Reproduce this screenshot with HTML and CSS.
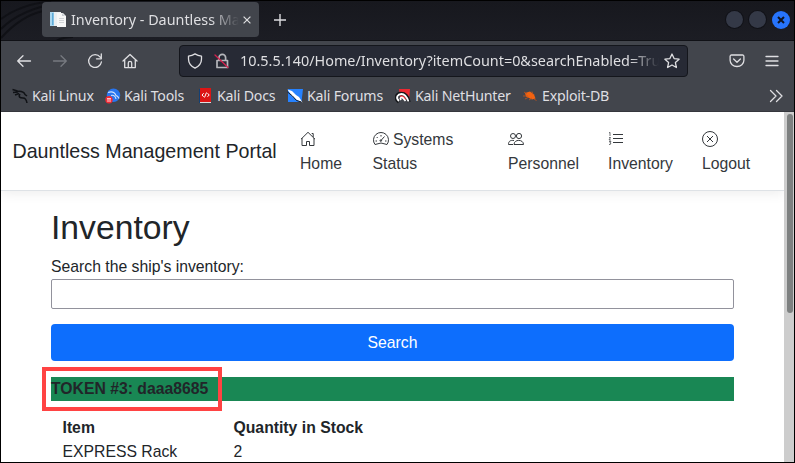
FILE: index.html
```html
<!DOCTYPE html>
<html lang="en">
<head>
<meta charset="utf-8">
<title>Inventory - Dauntless Management Portal</title>
<link rel="stylesheet" href="styles.css">
</head>
<body>
<div class="window">
  <header class="tabs">
    <svg class="streaks" width="130" height="40" viewBox="0 0 130 40"><path d="M0 18Q18 4 50 0M0 28Q20 8 58 2M0 37Q20 15 42 10M55 40Q62 36 72 36" /></svg>
    <div class="tab">
      <svg class="favicon" width="16" height="16" viewBox="0 0 16 16"><path fill="#a9d6ef" d="M0 0h6v14H0z"/><path fill="#5ea9d6" d="M2 1h1.500v12H2z"/><path fill="#e9edf0" d="M4 0h7v14H4z"/><path fill="#f6f6f6" d="M7 1h6l3 3v11H7z"/><path d="M9 6.500h5M9 8.500h5M9 10.500h5" stroke="#d0d3d6" fill="none"/><path fill="#c8cdd2" d="M12 1v3h3z"/></svg>
      <span class="tab-title">Inventory - Dauntless Man</span>
      <svg class="tab-close" width="8" height="8" viewBox="0 0 8 8"><path d="M.6.6l6.8 6.8M7.4.6L.6 7.4" stroke="#dedee0" stroke-width="1.2"/></svg>
    </div>
    <svg class="plus" width="12" height="12" viewBox="0 0 12 12"><path d="M6 0v12M0 6h12" stroke="#dcdcdf" stroke-width="1.4"/></svg>
    <div class="controls"><i></i><i></i><b><svg width="8" height="8" viewBox="0 0 8 8"><path d="M1 1l6 6M7 1L1 7" stroke="#10141f" stroke-width="2"/></svg></b></div>
  </header>
  <div class="toolbar">
    <svg class="ico back" width="16" height="16" viewBox="0 0 16 16"><path d="M14.5 8H1.700M7 2.700L1.700 8 7 13.300"/></svg>
    <svg class="ico forward" width="16" height="16" viewBox="0 0 16 16"><path d="M1.500 8h12.800M9 2.700L14.300 8 9 13.300"/></svg>
    <svg class="ico reload" width="16" height="16" viewBox="0 0 16 16"><path d="M13.200 4.200A6.400 6.400 0 1 0 14.400 9M14.300 1v4.800H9.500"/></svg>
    <svg class="ico home" width="16" height="16" viewBox="0 0 16 16"><path d="M1 8l7-6.500L15 8M2.700 7v7.600h10.600V7M6.300 14.500V10a1.700 1.700 0 0 1 3.400 0v4.500"/></svg>
    <div class="address">
      <svg class="ico" width="16" height="16" viewBox="0 0 16 16"><path d="M8 .9c2 1.300 4.200 2 6.500 2.200v2.800c0 4-2.700 7.300-6.500 9.300C4.200 13.200 1.500 9.900 1.500 5.900V3.100C3.800 2.900 6 2.200 8 .9z"/></svg>
      <svg class="ico lock" width="16" height="16" viewBox="0 0 16 16"><path d="M3 7.500h10.500v7H3zM5 7V4.600a3.300 3.300 0 0 1 6.600 0V7" stroke-width="1.700"/><path class="slash" d="M1 2l13 12.500"/></svg>
      <span class="url">10.5.5.140/Home/Inventory?itemCount=0&amp;searchEnabled=True</span>
      <svg class="ico star" width="16" height="16" viewBox="0 0 16 16"><path d="M8 1l2.100 4.600 5 .6-3.700 3.400 1 4.900L8 12l-4.400 2.500 1-4.900L.9 6.200l5-.6z"/></svg>
    </div>
    <svg class="ico pocket" width="16" height="16" viewBox="0 0 16 16"><path d="M2.500 2h11a1.400 1.400 0 0 1 1.400 1.400v3.800a6.900 6.300 0 0 1-13.800 0V3.400A1.400 1.400 0 0 1 2.500 2zM4.600 6L8 9.200 11.400 6"/></svg>
    <svg class="ico menu" width="14" height="14" viewBox="0 0 14 14"><path d="M1 2.500h12M1 7h12M1 11.500h12"/></svg>
  </div>
  <nav class="bookmarks">
    <svg class="bm-linux" width="16" height="16" viewBox="0 0 16 16"><path d="M.5 1.500l5 1.500M1 4.500l5-.5M3 7l4-1.500M5 3.500C9 3 12 4 13 6.500l2 1.500M8 6C6 9 8 10 11 10s3.500 2 4 5" fill="none" stroke="#101216" stroke-width="1.500"/></svg>
    <span>Kali Linux</span>
    <svg class="bm-tools" width="16" height="16" viewBox="0 0 16 16"><circle cx="8.500" cy="7.300" r="6.700" fill="#2875ef"/><path d="M3 4.500q6-2 8 3 2 .5 3 3M6 7.500q4-1 5 3.500" fill="none" stroke="#cfe2ff" stroke-width="1.100"/><circle cx="4" cy="11.800" r="3.700" fill="#f02b36"/><path d="M2 10.600h4M3 11v3M5 11v3" stroke="#fff" stroke-width=".8"/></svg>
    <span>Kali Tools</span>
    <svg class="bm-docs" width="14" height="16" viewBox="0 0 14 16"><path fill="#124075" d="M1 1h2v14H1z"/><path fill="#dc1515" d="M2 0h11v14H2z"/><path fill="#ddd" d="M2 14h11v1H2z"/><path d="M5.700 5.200L4 7l1.700 1.800M9.500 5.200L11.200 7 9.500 8.800M8.500 4.500l-2 5" fill="none" stroke="#fff"/></svg>
    <span>Kali Docs</span>
    <svg class="bm-forums" width="16" height="16" viewBox="0 0 16 16"><path fill="#2682ff" d="M1 1h15l-1.500 13H1z"/><path d="M.5 1.500L5 3l4 4 3 2 3.500 5.500L10 12 5 8z" fill="#fff"/><path d="M.5 4l5 4 4 4.500 5 1.500" fill="none" stroke="#111b29" stroke-width="1"/></svg>
    <span>Kali Forums</span>
    <svg class="bm-hunter" width="16" height="16" viewBox="0 0 16 16"><path fill="#ed2932" d="M4 1h11l-1 12-9-4z"/><path d="M4 14C-1 10 2 5.500 6 5.500s7 3.500 8 8.500" fill="none" stroke="#15171b" stroke-width="3.500"/><path d="M4 13C0 9.500 3 6 6.500 6s5.500 3.500 7 7.500M6 12c-1.500-2 .5-3.500 2-2l2.500 3" fill="none" stroke="#fff" stroke-width="1.800"/></svg>
    <span>Kali NetHunter</span>
    <svg class="bm-exploit" width="16" height="16" viewBox="0 0 16 16"><path fill="#f26311" d="M3 5l5-1.500 4 3 1.500 4-3.500 1-6-3z"/><path d="M2 4l3 2M1 8h5M3 11l4-2M7 12l3-2M12 11l2.500 1.500M10 3.500l1 3" stroke="#c65318" stroke-width=".8"/></svg>
    <span>Exploit-DB</span>
    <svg class="ico more" width="14" height="14" viewBox="0 0 14 14"><path d="M1.500 1.500L7 7l-5.500 5.500M7.500 1.500L13 7l-5.500 5.500"/></svg>
  </nav>
  <div class="viewport">
    <div class="page">
      <nav class="navbar">
        <div class="brand">Dauntless Management Portal</div>
        <a class="n-home"><svg width="16" height="16" viewBox="0 0 16 16" fill="none" stroke="currentColor"><path d="M2 7v7.500h4.500v-4h3v4H14V7M1 8.200L8 1.300l7 6.900M11.700 2.500h1.500v3.500"/></svg><br>Home</a>
        <a class="n-status"><svg width="16" height="16" viewBox="0 0 16 16" fill="none" stroke="currentColor"><path d="M2 13.500A7.500 7.500 0 1 1 14 13.500Q8 10.500 2 13.500zM8 4v1.500M3.700 6l1 1M2.500 10H4M12 10h1.500M7.500 10l4-4.500"/><circle cx="7.800" cy="9.600" r=".8"/></svg> Systems Status</a>
        <a class="n-people"><svg width="16" height="16" viewBox="0 0 16 16" fill="none" stroke="currentColor"><circle cx="11" cy="5" r="2.600"/><circle cx="5" cy="5" r="2.500"/><path d="M6 13.500c0-5.500 9.500-5.500 9.500 0zM5 13.500H.5c0-3.500 2-4.500 5.500-4"/></svg><br>Personnel</a>
        <a class="n-list"><svg width="16" height="16" viewBox="0 0 16 16" fill="none" stroke="currentColor"><path d="M5 3.500h10M5 7.500h10M5 11.500h10"/><path stroke-width=".7" d="M1 2l1-.7V5M1 6.500h1.500L1 9h2M1 10.500h2L1.800 12h.8q.8 1-.6 1.500H1"/></svg><br>Inventory</a>
        <a class="n-out"><svg width="16" height="16" viewBox="0 0 16 16" fill="none" stroke="currentColor"><circle cx="8" cy="8" r="7.500"/><path d="M5 5l6 6M11 5l-6 6"/></svg><br>Logout</a>
      </nav>
      <main class="content">
        <h1>Inventory</h1>
        <label for="q">Search the ship's inventory:</label>
        <input id="q" class="query" type="text">
        <button class="search">Search</button>
        <div class="token"><strong>TOKEN #3: daaa8685</strong><div class="marker"></div></div>
        <div class="stock">
          <strong>Item</strong><strong>Quantity in Stock</strong>
          <span>EXPRESS Rack</span><span>2</span>
        </div>
      </main>
    </div>
    <div class="scrollbar"><div class="thumb"></div></div>
  </div>
</div>
</body>
</html>
```
FILE: styles.css
```css
* { box-sizing: border-box; }
body { margin: 0; overflow: hidden; }
svg { flex: none; }
.window { width: 795px; height: 463px; border: 1px solid #000; display: flex; flex-direction: column; overflow: hidden; font-family: "Noto Sans", sans-serif; font-size: 14.35px; color: #dfdfe2; }
.tabs { position: relative; height: 40px; flex: none; display: flex; background: linear-gradient(#17181e, #1c1d24); border-bottom: 1px solid #101116; }
.streaks { position: absolute; left: 0; top: 0; fill: none; stroke: #101116; stroke-width: 2; }
.tab { position: relative; width: 217px; height: 35px; margin: 1px 0 0 41px; background: #42454c; border-radius: 4px; display: flex; align-items: center; }
.favicon { margin-left: 8px; }
.tab-title { margin-left: 5px; width: 168px; overflow: hidden; white-space: nowrap; line-height: 24px; mask-image: linear-gradient(90deg, #000 83%, transparent); }
.tab-close { margin-left: 4px; }
.plus { margin: 13px 0 0 15px; }
.controls { margin: 10px 4px 0 auto; display: flex; gap: 6px; }
.controls i, .controls b { width: 17px; height: 17px; border-radius: 50%; background: #343947; box-shadow: 0 0 0 1px #111218; display: flex; align-items: center; justify-content: center; }
.controls b { width: 18px; height: 18px; background: #2774fb; box-shadow: none; }
.toolbar { height: 40px; flex: none; background: #42454c; display: flex; align-items: center; padding-left: 15px; }
.ico { fill: none; stroke: #dfdfe2; stroke-width: 1.3; stroke-linejoin: round; stroke-linecap: round; }
.forward { margin-left: 20px; stroke: #777a80; }
.reload { margin-left: 19px; }
.home { margin-left: 19px; }
.address { margin-left: 41px; width: 509px; height: 32px; background: #272a35; border: 1px solid #14161c; border-radius: 4px; display: flex; align-items: center; padding-left: 7px; }
.lock { margin-left: 11px; stroke: #b5b6bb; }
.slash { stroke: #d4204d; stroke-width: 1.3; }
.url { margin-left: 10px; width: 419px; overflow: hidden; white-space: nowrap; font-size: 14.4px; line-height: 24px; mask-image: linear-gradient(90deg, #000 93%, transparent); }
.star { margin-left: 5px; }
.pocket { margin-left: 41px; }
.menu { margin-left: 20px; }
.bookmarks { height: 31px; flex: none; background: #42454c; border-bottom: 1px solid #35373d; display: flex; align-items: center; white-space: nowrap; padding: 0 11px 0 11px; font-size: 14.2px; letter-spacing: -.22px; }
.bookmarks span { line-height: 22px; margin-left: 4px; flex: none; }
.bm-linux + span { width: 61px; }
.bm-tools { margin-left: 12px; }
.bm-tools + span { width: 62px; margin-left: 3px; }
.bm-docs { margin-left: 12px; }
.bm-docs + span { width: 58px; margin-left: 5px; }
.bm-forums { margin-left: 12px; }
.bm-forums + span { width: 76px; }
.bm-hunter { margin-left: 12px; }
.bm-hunter + span { width: 95px; }
.bm-exploit { margin-left: 12px; }
.more { margin-left: auto; }
.viewport { flex: 1; min-height: 0; display: flex; background: #fff; color: #212529; font: 15.75px/23.7px "Liberation Sans", Arial, sans-serif; }
.page { flex: 1; min-width: 0; overflow: hidden; }
.navbar { height: 79px; display: grid; grid-template-columns: 287.5px 72.5px 135.5px 100px 94px 1fr; align-items: center; padding-left: 11.5px; border-bottom: 1px solid #dee2e6; box-shadow: 0 2px 12px rgba(0,0,0,.08); }
.brand { font-size: 19.65px; line-height: 30px; white-space: nowrap; }
.navbar a { color: #34383c; padding-top: 2px; }
.navbar svg { vertical-align: -2px; }
.n-status { width: 100px; }
.content { width: 683px; margin-left: 50px; display: flex; flex-direction: column; }
h1 { margin: 16px 0 8px; font-size: 33.7px; line-height: 40px; font-weight: normal; }
label { height: 24px; }
.query { height: 30px; border: 1px solid #92929c; border-radius: 2px; background: #fff; padding: 0; }
.search { margin-top: 15px; height: 37px; border: 0; border-radius: 4px; background: #0d6efd; color: #fff; font: inherit; }
.token { position: relative; margin-top: 16px; height: 24px; background: #198754; white-space: nowrap; line-height: 23px; }
.marker { position: absolute; left: -9px; top: -10px; width: 180px; height: 44px; border: 4px solid #ff4343; }
.stock { margin: 15px 0 0 11.5px; display: grid; grid-template-columns: 171px 1fr; }
.scrollbar { width: 10px; flex: none; background: #cdcdcd; padding: 2px 1px 0 3px; }
.thumb { height: 199px; border-radius: 3px; background: #7d8080; }
```
